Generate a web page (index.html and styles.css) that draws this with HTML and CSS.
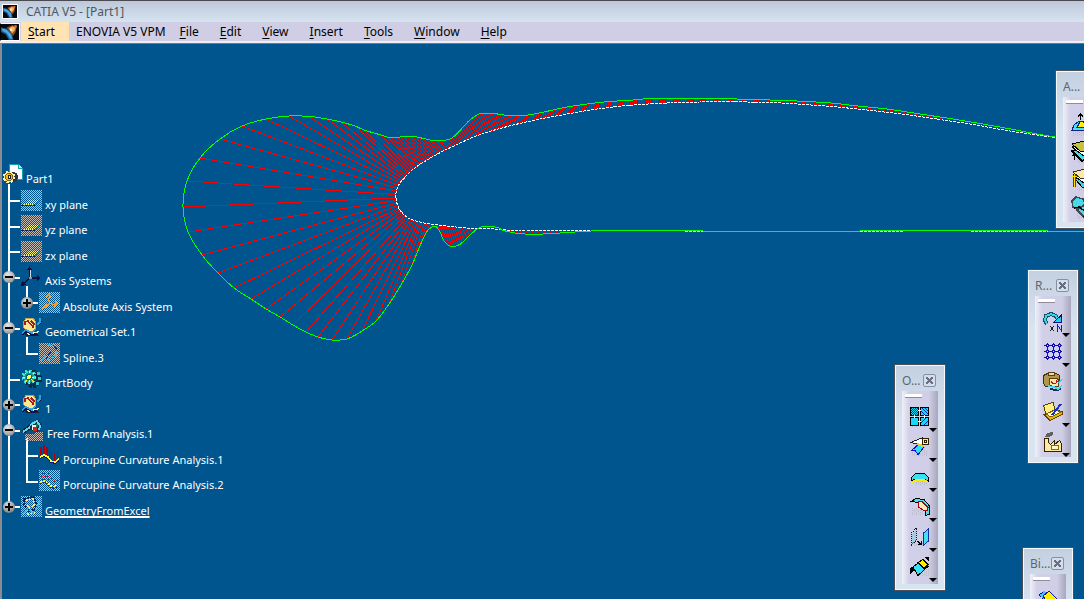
FILE: index.html
```html
<!DOCTYPE html>
<html lang="en">
<head>
<meta charset="utf-8">
<title>CATIA V5 - [Part1]</title>
<link rel="stylesheet" href="styles.css">
</head>
<body>
<svg class="defs" aria-hidden="true">
  <defs>
    <pattern id="chk" width="2" height="2" patternUnits="userSpaceOnUse"><path fill="#c4bcb4" d="M0 0h1v1H0zM1 1h1v1H1z"/></pattern>
    <pattern id="dots" width="2" height="2" patternUnits="userSpaceOnUse"><path fill="#1220c0" d="M0 0h1v1H0zM1 1h1v1H1z"/></pattern>
    <pattern id="shade" width="4" height="2" patternUnits="userSpaceOnUse"><path fill="#b8b8c4" d="M0 0h1v1H0zM2 1h1v1H2z"/></pattern>
  </defs>
  <symbol id="logo" viewBox="0 0 16 14" preserveAspectRatio="none">
    <path fill="#080810" d="M0 0h16v14H0z"/>
    <path fill="#1c5a90" d="M0 3l5 1 5 4 1 6H7L4 9 0 7z"/>
    <path fill="#48a8e0" d="M1 4l4 1 4 4 1 4H8L5 8 1 6z"/>
    <path fill="#a04c18" d="M5 3l5-2 4 1-1 5-2 3-3-3z"/>
    <path fill="#f0b060" d="M7 4l3-2 3 1-1 3-2 2z"/>
    <path fill="#fff4d0" d="M8 4h2v2H8z"/><path fill="#d07830" d="M12 1h2v2h-2z"/>
  </symbol>
  <symbol id="part" viewBox="0 0 21 21">
    <path fill="#fff" stroke="#10a0b0" d="M6.500.5h9l4 4v11h-13z"/><path fill="#b8e8f0" stroke="#10a0b0" d="M15.500.5v4h4"/>
    <circle cx="10" cy="13" r="5" fill="#303048"/>
    <circle cx="6" cy="13" r="5" fill="#ffe080" stroke="#fff0b0" stroke-width="3" stroke-dasharray="2 2"/>
    <circle cx="6" cy="13" r="3.500" fill="#e8c020" stroke="#806010"/><path fill="#202020" d="M5 11h3v4H5z"/><path fill="#ffff80" d="M6 12h1v2H6z"/>
  </symbol>
  <symbol id="plane" viewBox="0 0 21 21">
    <path fill="url(#chk)" d="M0 0h21v21H0z"/>
    <path fill="#00558e" d="M7 10h12l-6 6H2z" opacity=".6"/>
    <path stroke="#ffff70" stroke-dasharray="1 1" d="M8 10.500h11M7 11.500h10M6 12.500h10M5 13.500h9M3 14.500h9"/>
    <path stroke="#101060" d="M0 15.500h14" stroke-dasharray="3 1"/><path stroke="#20c0c0" stroke-dasharray="2 1" d="M14 15l5-5" fill="none"/>
  </symbol>
  <symbol id="axis" viewBox="0 0 21 21">
    <path stroke="#101040" fill="none" stroke-width="1.500" d="M8.500 2v10h9M8.500 12l-6 6"/>
    <path stroke="#e0d8e0" fill="none" d="M9.500 3v8"/>
    <path fill="#101040" d="M6 4l2.500-4L11 4zM16 9l4 3-4 3zM1 15l-1 5 5-1z"/><path fill="#60a0c8" d="M8 11h3v2H8z"/>
  </symbol>
  <symbol id="absaxis" viewBox="0 0 21 21">
    <path fill="url(#chk)" d="M0 0h21v21H0z"/>
    <path stroke="#f09820" fill="none" stroke-width="2" stroke-dasharray="2 1" d="M9.500 2v10h9M9.500 12L2 18"/>
    <path stroke="#f09820" fill="none" d="M7 5l3-4 2 4M15 9l4 3-4 3"/>
  </symbol>
  <symbol id="geoset" viewBox="0 0 21 21">
    <path fill="#202030" d="M6 15h9l3 4H5l-2-2z"/>
    <path fill="#ffe890" stroke="#c8a040" d="M2.500 5L5 1.500 12 1l2 3v9l-3 2-5-1-4-4z"/>
    <path fill="#fff4b8" d="M6 15h7l5-1-4 4H7z"/>
    <path stroke="#a02020" stroke-width="1.500" fill="none" d="M4 8V5l3-1 5 6 1-3-3-3"/>
    <path stroke="#101050" stroke-width="2" fill="none" d="M1 18l4-4 3 1 3 3 5-1M18 8l2-4"/>
    <path stroke="#30a0d8" stroke-width="1.500" fill="none" d="M1 16l4-3 6 3 3-4M16 8l3-3V1"/>
  </symbol>
  <symbol id="spline" viewBox="0 0 21 21">
    <path fill="url(#chk)" d="M0 0h21v21H0z"/>
    <path stroke="#38b0e0" stroke-width="2" fill="none" stroke-dasharray="3 1" d="M3 18l3-5 2 1 3 4M9 2h5l4 5-1 5-4 3"/>
    <path stroke="#103080" fill="none" d="M7 16l5-8M14 2l5 6"/>
  </symbol>
  <symbol id="body" viewBox="0 0 21 21">
    <circle cx="12" cy="11" r="7" fill="#103050" stroke="#102848" stroke-width="4" stroke-dasharray="3 1"/>
    <circle cx="8" cy="9" r="6" fill="#189888" stroke="#38e0d8" stroke-width="3" stroke-dasharray="2 2"/>
    <path stroke="#ffff50" stroke-dasharray="2 1" d="M8.500 3v13M2 9.500h13M4 5l9 9M13 5l-9 9"/>
    <circle cx="8" cy="9" r="2.500" fill="#ffff40" stroke="#106070"/>
    <path fill="#30c8c0" d="M16 4h3v3h-3zM17 9h3v3h-3zM15 14h3v3h-3z"/>
  </symbol>
  <symbol id="analysis" viewBox="0 0 23 23">
    <path fill="url(#chk)" d="M4 15h8l3-2h7v9H4z"/>
    <path stroke="#102030" stroke-width="4" d="M2 13l7-5" fill="none"/><path fill="#103050" d="M7 6l10-6 4 7-4 6-8-2z"/>
    <path stroke="#60d8e8" stroke-width="2" fill="none" d="M2 13l7-5M9 6l7-4 3 5-1 4"/>
    <path fill="#f0f0e8" d="M11 6h5v5h-5z"/><path fill="#d02020" d="M12 8h4v4h-4z"/><path fill="#108050" d="M15 5h2v3h-2z"/>
  </symbol>
  <symbol id="comb" viewBox="0 0 21 21">
    <path fill="#b00010" d="M1 2h2v9H1zM4 0h2v10H4zM7 2h2v10H7zM10 5h1v8h-1zM12 7h1v8h-1zM15 8h1v8h-1zM18 7h1v8h-1z"/>
    <path stroke="#101080" stroke-width="2" fill="none" d="M1 13l4-2 4 2 3 4 4 1 4-3"/>
    <path stroke="#ffff20" stroke-width="1.500" fill="none" d="M1 12l4-2 4 2 3 4 4 1 4-3"/>
  </symbol>
  <symbol id="combhid" viewBox="0 0 21 21">
    <path fill="url(#chk)" d="M0 0h21v21H0z"/>
    <path fill="#c81828" d="M2 3h2v1H2zM5 3h2v1H5zM8 3h2v1H8zM2 6h2v1H2zM5 6h2v1H5zM8 6h2v1H8zM2 9h2v1H2zM5 9h2v1H5zM8 9h2v1H8zM12 8h1v2h-1zM15 10h1v2h-1zM18 9h1v2h-1z"/>
    <path stroke="#1830a0" stroke-dasharray="2 1" fill="none" stroke-width="1.500" d="M1 14l5-2 4 3 3 3 6-1"/><path stroke="#ffff30" stroke-dasharray="2 1" fill="none" stroke-width="1.500" d="M1 12l5-1 4 3 3 3 6-2"/>
  </symbol>
  <symbol id="excel" viewBox="0 0 21 21">
    <path fill="url(#chk)" d="M0 0h21v21H0z"/>
    <path fill="none" stroke="#101850" stroke-width="2" stroke-dasharray="2 1" d="M3 3l9-2 3 4-1 8-6 2-5-6z"/>
    <path fill="none" stroke="#ffe870" stroke-width="1.500" stroke-dasharray="2 1" d="M5 4l7-1 1 7-5 2-3-4M6 18l8-1"/>
    <path fill="none" stroke="#38b0d8" stroke-width="1.500" stroke-dasharray="3 1" d="M2 17l5-4 5 4 5-7 2-6"/>
  </symbol>

  <symbol id="t-patch" viewBox="0 0 20 20">
    <path fill="url(#shade)" d="M2 19h16v1H2z"/>
    <path fill="#18d8f8" stroke="#000" d="M.5.500h8v8h-8zM10.500.500h8v8h-8zM.5 10.500h8v8h-8zM10.500 10.500h8v8h-8z"/>
    <path fill="url(#dots)" d="M1 1h7v7H1z"/><path stroke="#1020b0" d="M12 1l6 6M11 4l4 4M15 1l3 3M16 11l-5 5M18 14l-4 4"/>
    <path stroke="#fff" d="M8 3.500h3M4.500 8v3M14.500 8v3M8 14.500h3"/>
  </symbol>
  <symbol id="t-scan" viewBox="0 0 20 20">
    <path fill="url(#shade)" d="M2 13h16v6H2z"/>
    <path fill="#28e0f8" d="M1 13l8-6 6 3-7 8-3-5z"/><path stroke="#1010d0" fill="none" d="M1 14l8-7M1 14l4-1 3 5 6-8"/>
    <path fill="#fff" stroke="#202020" d="M.5 5.500L12 1v6l-5 0z"/><path stroke="#e8d020" stroke-width="2" d="M7 7l6 2"/>
    <path fill="#ffe8a0" stroke="#302000" d="M12.500 1.500h6v6h-6z"/><path stroke="#302000" fill="none" d="M14.500 3.500h2v2h-2z"/>
  </symbol>
  <symbol id="t-dome" viewBox="0 0 20 20">
    <path fill="url(#shade)" d="M5 14h13v4H5z"/>
    <path fill="#38e0f4" stroke="#000" d="M1.500 13.500L2 10l4-4h8l4 4v4l-4-2H6z"/><path stroke="#ffe800" stroke-width="2" fill="none" d="M2 15l4-2h8l4 2"/>
  </symbol>
  <symbol id="t-bend" viewBox="0 0 20 20">
    <path fill="url(#shade)" d="M2 11h12v7H2z"/>
    <path fill="#50e0e8" stroke="#000" d="M1 4.500l5-3 8 1 5 6v9l-4 1v-5l-6-8z"/><path fill="#ffe8b8" stroke="#a00010" d="M8 4.500h4l6 6-1 3-3 0-5-3-1-3z"/>
  </symbol>
  <symbol id="t-mirror" viewBox="0 0 20 20">
    <path fill="url(#shade)" d="M4 16h14v3H4z"/>
    <path fill="none" stroke="#101820" stroke-dasharray="1 1" d="M1.500 6l5-5v12l-5 5z"/><path fill="#70c8d8" opacity=".5" d="M2 7l4-4v10l-4 4z"/>
    <path fill="#40e0f0" stroke="#1030a0" d="M13.500 6l5-4v12l-5 4z"/><path stroke="#000" d="M7 14l4 3M11.500 14v3.500H8" fill="none"/>
  </symbol>
  <symbol id="t-extend" viewBox="0 0 20 20">
    <path fill="url(#shade)" d="M6 11h13v8H6z"/>
    <path fill="#38e0f8" stroke="#000" d="M1 11.500l9-7 5 2 3 3-10 9-3-5z"/><path fill="#ffec00" stroke="#000" d="M8 5.500l5-3 5 5-4 4z"/><path fill="#000" d="M14 0h5v5zM0 11l4-1 1 3-5 4z"/>
  </symbol>
  <symbol id="t-repeat" viewBox="0 0 20 20">
    <path fill="none" stroke="#105060" stroke-width="4" d="M4 12L2 8l1-4 5-2 5 2 2 4"/><path fill="none" stroke="#38d8f0" stroke-width="2" d="M4 12L2 8l1-4 5-2 5 2 2 4"/>
    <path fill="#18d0f0" stroke="#101080" d="M18.500 3v7.500h-8z"/><path stroke="#202020" d="M7 14l4 5M11 14l-4 5"/><path fill="none" stroke="#1010f0" d="M14.500 20v-7l4 6v-6"/>
  </symbol>
  <symbol id="t-grid" viewBox="0 0 20 20">
    <path stroke="#1010b0" d="M1 3.500h18M1 9.500h18M1 15.500h18M4.500 1v17M10.500 1v17M16.500 1v17"/>
    <path fill="#e8e8ff" stroke="#1010b0" d="M3 3.500L4.500 2 6 3.500 4.500 5zM9 3.500L10.500 2 12 3.500 10.500 5zM15 3.500L16.500 2 18 3.500 16.500 5zM3 9.500L4.500 8 6 9.500 4.500 11zM9 9.500L10.500 8 12 9.500 10.500 11zM15 9.500L16.500 8 18 9.500 16.500 11zM3 15.500L4.500 14 6 15.500 4.500 17zM9 15.500L10.500 14 12 15.500 10.500 17zM15 15.500L16.500 14 18 15.500 16.500 17z"/>
  </symbol>
  <symbol id="t-paste" viewBox="0 0 20 20">
    <path fill="#b09848" stroke="#403010" d="M.5 3.500l4-2h9l3 2v7l-4 4h-10l-2-3z"/><path fill="#f0d8a0" stroke="#504020" d="M5.500.500h6v3h-6z"/>
    <path fill="#ffe8a8" stroke="#604010" d="M6.500 6.500h8l1 2v6h-6l-3-2z"/><path stroke="#c01010" fill="none" d="M8 9l2 3 3-1V8l2 2"/><path fill="none" stroke="#103060" stroke-width="2" d="M7 17l6 1 5-1"/><path stroke="#40d8f0" fill="none" stroke-width="1.500" d="M5 14l6 1 4 2 4-3M16 11l3-4"/>
  </symbol>
  <symbol id="t-book" viewBox="0 0 20 20">
    <path fill="#e8b800" stroke="#604000" d="M1 12.500l6 6 12-6v-3l-7-2z"/><path fill="#fff080" stroke="#504000" d="M.5 3.500L10 .5l2 7-9 5z"/><path fill="#fff8b8" stroke="#806000" d="M3 12l9-4 6 2-10 5z"/><path stroke="#1030d0" stroke-width="2" d="M9 13l9-11"/>
  </symbol>
  <symbol id="t-factory" viewBox="0 0 20 20">
    <path fill="#606060" d="M2 5l2-4 6-1v3L6 5z"/><path fill="#ffe8a0" stroke="#302000" d="M1.500 19.500v-13h4v4l2 2 4-4v4l5-4 2 3v8z"/><path fill="#fff8d0" stroke="#806820" d="M8.500 13.500h7v4h-7z"/>
  </symbol>
  <symbol id="t-cap" viewBox="0 0 24 24">
    <path fill="url(#shade)" d="M2 19h20v5H2z"/><path stroke="#000" d="M9.500 1v7M7 4.500L9.500 2 12 4.500" fill="none"/><path fill="#48e0f0" stroke="#102080" d="M1 18l2-5 5-4 8 1 6 8z"/><path fill="#fff000" stroke="#1010d0" d="M6 15.500l3-6h3l5 6z"/>
  </symbol>
  <symbol id="t-offset" viewBox="0 0 24 24">
    <path fill="url(#shade)" d="M6 19h18v4H6z"/><path fill="#38e0f0" stroke="#000" stroke-width="1.500" d="M1 11l12-4 10 8-12 6z"/><path fill="#fff" stroke="#000" d="M1 7l12-4 10 8-10 5z"/><path fill="#c8c040" stroke="#000" d="M1 4l12-3 10 8-13 3z"/><path stroke="#000" d="M3.500 20v-6M1 16l3-2 2 2" fill="none"/>
  </symbol>
  <symbol id="t-thick" viewBox="0 0 24 24">
    <path fill="url(#shade)" d="M6 19h18v4H6z"/><path fill="#30d8e8" stroke="#000" d="M4 11l10-4 9 8-11 5z"/><path fill="#fff" stroke="#000" d="M2 7l12-4 9 8-10 4z"/><path fill="#ffe8a0" stroke="#303030" d="M2 4l12-3 9 8-13 2z"/><path stroke="#b01010" stroke-width="3" d="M3.500 19V7"/><path stroke="#ffe000" d="M3.500 19V6M1 8.500h5"/>
  </symbol>
  <symbol id="t-join" viewBox="0 0 24 24">
    <path fill="url(#shade)" d="M6 16h18v7H6z"/><path fill="#48d8e8" stroke="#404850" stroke-width="1.500" d="M1 5l4-4 7 2 2 5-7 5-5-2zM6 14l9-6 7 3v6l-9 4z"/><path stroke="#000" fill="none" stroke-width="1.500" d="M3 12l5-1 7 5-2 5"/>
  </symbol>
  <symbol id="t-measure" viewBox="0 0 20 20">
    <path fill="#40c8e8" stroke="#1010a0" stroke-dasharray="1 1" d="M1 5l5-4 5 3-5 6z"/><path fill="#fff000" stroke="#1010c0" d="M5 6l6-5 9 9v9h-6z"/>
  </symbol>
</svg>

<header class="titlebar">
  <svg class="title-logo"><use href="#logo"/></svg>
  <h1>CATIA V5 - [Part1]</h1>
</header>
<nav class="menubar" aria-label="Main menu">
  <svg class="menu-logo"><use href="#logo"/></svg>
  <button class="menu active" type="button"><u>S</u>tart</button>
  <button class="menu tight" type="button">ENOVIA V5 VPM</button>
  <button class="menu" type="button"><u>F</u>ile</button>
  <button class="menu" type="button"><u>E</u>dit</button>
  <button class="menu" type="button"><u>V</u>iew</button>
  <button class="menu" type="button"><u>I</u>nsert</button>
  <button class="menu" type="button"><u>T</u>ools</button>
  <button class="menu" type="button"><u>W</u>indow</button>
  <button class="menu" type="button"><u>H</u>elp</button>
</nav>

<main class="workspace">
  <svg class="viewport" width="1082" height="555" viewBox="2 44 1082 555" role="img" aria-label="Porcupine curvature analysis of an airfoil spline">
    <path id="teeth" class="teeth"/>
    <path id="curve-upper" class="curve"/>
    <path id="curve-lower" class="curve"/>
    <path id="envelope" class="envelope"/>
    <path class="envelope" d="M600 230.500H703M703 231.500H860M860 230.500H1048M1048 231.500H1084"/>
    <path class="curve" d="M685 231.500H703M860 231.500H904M971 231.500H1048"/>
  </svg>

  <div class="tree-pane">
    <svg class="links" width="60" height="357" viewBox="2 162 60 357" aria-hidden="true">
      <path d="M9 184V507M9 201H20M9 227H20M9 252H20M9 278H20M9 329H20M9 380H20M9 405H20M9 431H20M9 507H20M27 286V303H38M27 337V354H38M27 438V482H38M27 456H38"/>
    </svg>
    <ul class="tree" role="tree">
      <li class="root" role="treeitem"><svg class="icon"><use href="#part"/></svg><span>Part1</span></li>
      <li role="treeitem"><svg class="icon"><use href="#plane"/></svg><span>xy plane</span></li>
      <li role="treeitem"><svg class="icon"><use href="#plane"/></svg><span>yz plane</span></li>
      <li role="treeitem"><svg class="icon"><use href="#plane"/></svg><span>zx plane</span></li>
      <li role="treeitem"><button class="toggle open" type="button" aria-label="Collapse Axis Systems"></button><svg class="icon"><use href="#axis"/></svg><span>Axis Systems</span></li>
      <li class="child" role="treeitem"><button class="toggle" type="button" aria-label="Expand Absolute Axis System"></button><svg class="icon"><use href="#absaxis"/></svg><span>Absolute Axis System</span></li>
      <li role="treeitem"><button class="toggle open" type="button" aria-label="Collapse Geometrical Set.1"></button><svg class="icon"><use href="#geoset"/></svg><span>Geometrical Set.1</span></li>
      <li class="child" role="treeitem"><svg class="icon"><use href="#spline"/></svg><span>Spline.3</span></li>
      <li role="treeitem"><svg class="icon"><use href="#body"/></svg><span>PartBody</span></li>
      <li role="treeitem"><button class="toggle" type="button" aria-label="Expand 1"></button><svg class="icon"><use href="#geoset"/></svg><span>1</span></li>
      <li role="treeitem"><button class="toggle open" type="button" aria-label="Collapse Free Form Analysis.1"></button><svg class="icon large"><use href="#analysis"/></svg><span>Free Form Analysis.1</span></li>
      <li class="child" role="treeitem"><svg class="icon"><use href="#comb"/></svg><span>Porcupine Curvature Analysis.1</span></li>
      <li class="child" role="treeitem"><svg class="icon"><use href="#combhid"/></svg><span>Porcupine Curvature Analysis.2</span></li>
      <li role="treeitem"><button class="toggle" type="button" aria-label="Expand GeometryFromExcel"></button><svg class="icon"><use href="#excel"/></svg><span class="current">GeometryFromExcel</span></li>
    </ul>
  </div>

  <section class="palette palette-a" aria-label="Advanced surfaces">
    <header><h2>A...</h2><button class="close" type="button" aria-label="Close"></button></header>
    <div class="tools wide">
      <button class="tool" type="button" aria-label="Extrapolate"><svg><use href="#t-cap"/></svg></button>
      <button class="tool" type="button" aria-label="Offset"><svg><use href="#t-offset"/></svg></button>
      <button class="tool" type="button" aria-label="Thicken"><svg><use href="#t-thick"/></svg></button>
      <button class="tool" type="button" aria-label="Join"><svg><use href="#t-join"/></svg></button>
    </div>
  </section>

  <section class="palette palette-r" aria-label="Replication">
    <header><h2>R...</h2><button class="close" type="button" aria-label="Close"></button></header>
    <div class="tools">
      <button class="tool more" type="button" aria-label="Repeat"><svg><use href="#t-repeat"/></svg></button>
      <button class="tool more" type="button" aria-label="Pattern"><svg><use href="#t-grid"/></svg></button>
      <button class="tool" type="button" aria-label="Duplicate set"><svg><use href="#t-paste"/></svg></button>
      <button class="tool more" type="button" aria-label="Catalog"><svg><use href="#t-book"/></svg></button>
      <button class="tool more" type="button" aria-label="PowerCopy"><svg><use href="#t-factory"/></svg></button>
    </div>
  </section>

  <section class="palette palette-o" aria-label="Operations">
    <header><h2>O...</h2><button class="close" type="button" aria-label="Close"></button></header>
    <div class="tools">
      <button class="tool more" type="button" aria-label="Join"><svg><use href="#t-patch"/></svg></button>
      <button class="tool more" type="button" aria-label="Split"><svg><use href="#t-scan"/></svg></button>
      <button class="tool more" type="button" aria-label="Boundary"><svg><use href="#t-dome"/></svg></button>
      <button class="tool more" type="button" aria-label="Fillet"><svg><use href="#t-bend"/></svg></button>
      <button class="tool more" type="button" aria-label="Translate"><svg><use href="#t-mirror"/></svg></button>
      <button class="tool more" type="button" aria-label="Extrapolate"><svg><use href="#t-extend"/></svg></button>
    </div>
  </section>

  <section class="palette palette-b" aria-label="BiW templates">
    <header><h2>Bi...</h2><button class="close" type="button" aria-label="Close"></button></header>
    <div class="tools">
      <button class="tool" type="button" aria-label="Junction"><svg><use href="#t-measure"/></svg></button>
    </div>
  </section>
</main>
<script src="script.js"></script>
</body>
</html>
```
FILE: styles.css
```css
* { box-sizing: border-box; }
body {
  margin: 0;
  height: 100vh;
  display: flex;
  flex-direction: column;
  overflow: hidden;
  font-family: "Noto Sans", "Open Sans", sans-serif;
  font-size: 12px;
  background: #00558e;
}
button { font: inherit; color: inherit; border: 0; padding: 0; margin: 0; background: none; }
h1, h2 { margin: 0; font-weight: 400; font-size: 12px; }
.defs { position: absolute; width: 0; height: 0; }

.titlebar {
  flex: none;
  height: 22px;
  display: flex;
  align-items: center;
  gap: 8px;
  padding-left: 2px;
  border-top: 1px solid #4a4a50;
  background: linear-gradient(#bdc9da, #d6e3f0);
  color: #50565e;
}
.title-logo { width: 16px; height: 15px; border: 1px solid #fff; }

.menubar {
  flex: none;
  height: 21px;
  display: flex;
  align-items: stretch;
  background: #d0cee5;
  border-bottom: 2px solid #f0eef4;
  color: #000;
}
.menu-logo { width: 20px; height: 18px; margin: 1px 1px 0 0; border: 1px solid #fff; border-left-color: #000; }
.menu { padding: 0 14px 0 7px; line-height: 19px; }
.menu.tight { padding-right: 7px; }
.menu.active { background: #ffe3b3; }
.menu u { text-underline-offset: 2px; }

.workspace {
  position: relative;
  flex: 1;
  min-height: 0;
  overflow: hidden;
  border-top: 1px solid #707884;
  border-left: 2px solid #888c90;
  background: #00558e;
}
.viewport { position: absolute; top: 0; left: 0; }
.viewport path { fill: none; stroke-width: 1; shape-rendering: crispEdges; }
.viewport .teeth { stroke: #f00; }
.viewport .curve { stroke: #fff; stroke-dasharray: 3 1; }
.viewport .envelope { stroke: #0f0; }

.tree-pane { position: relative; width: 260px; padding-top: 118px; }
.links { position: absolute; left: 0; }
.links path { fill: none; stroke: #fff; stroke-width: 2; shape-rendering: crispEdges; }
.tree {
  position: relative;
  margin: 0;
  padding: 0;
  list-style: none;
  display: grid;
  grid-template-rows: repeat(7, 26px 25px);
  font-size: 11px;
  color: #fff;
}
.tree li { display: flex; align-items: flex-start; gap: 3px; padding: 2px 0 0 19px; white-space: nowrap; }
.tree li.root { padding-left: 1px; gap: 2px; }
.tree li.child { padding-left: 37px; }
.tree span { padding-top: 7px; line-height: 16px; }
.tree .current { text-decoration: underline 2px; text-underline-offset: 1px; text-decoration-skip-ink: none; }
.icon { flex: none; width: 21px; height: 21px; shape-rendering: crispEdges; }
.icon.large { width: 23px; height: 23px; }
.toggle {
  width: 12px;
  height: 12px;
  margin: 5px 3px 0 -18px;
  border-radius: 50%;
  background:
    linear-gradient(#000, #000) center / 8px 2px no-repeat,
    linear-gradient(#000, #000) center / 2px 8px no-repeat,
    radial-gradient(circle at 40% 30%, #d8d8d8, #989898 60%, #505050);
}
.toggle.open {
  background:
    linear-gradient(#000, #000) center / 8px 2px no-repeat,
    radial-gradient(circle at 40% 30%, #e8e8e8, #a8a8a8 60%, #606060);
}

.palette {
  position: absolute;
  width: 52px;
  padding: 0 7px 6px;
  border: 1px solid #4c5058;
  box-shadow: inset 0 0 0 1px #f4f8fc;
  background: linear-gradient(#c3d0e0, #d9e4f1 60px);
}
.palette header { height: 26px; padding-top: 5px; display: flex; align-items: center; justify-content: space-between; color: #60666e; }
.palette h2 { line-height: 16px; }
.close {
  width: 13px;
  height: 13px;
  margin-right: 2px;
  border: 1px solid #8490a4;
  border-radius: 2px;
  background:
    linear-gradient(45deg, transparent 40%, #687080 40% 60%, transparent 60%) center / 7px 7px no-repeat,
    linear-gradient(-45deg, transparent 40%, #687080 40% 60%, transparent 60%) center / 7px 7px no-repeat,
    #d4deea;
}
.tools {
  position: relative;
  display: flex;
  flex-direction: column;
  padding: 11px 0 2px;
  background: linear-gradient(90deg, #f0f0fa, #d2d0e8 20%, #d0cee6 75%, #a8a6bc);
}
.tools::before {
  content: "";
  position: absolute;
  top: 3px;
  left: 3px;
  width: 17px;
  height: 3px;
  background: #fff;
  border-bottom: 1px solid #908c9c;
}
.tool { position: relative; height: 30px; padding-left: 8px; display: flex; align-items: center; }
.tool svg { flex: none; width: 20px; height: 20px; shape-rendering: crispEdges; }
.tool.more::after {
  content: "";
  position: absolute;
  right: 1px;
  bottom: 0;
  border: 4px solid transparent;
  border-bottom: 0;
  border-top-color: #000;
}
.wide { padding: 13px 0 0; }
.wide .tool svg { width: 24px; height: 24px; }
.wide .tool { height: 28px; }

.palette-a { top: 26px; right: -23px; }
.palette-r { top: 225px; right: 5px; }
.palette-r .tools { padding-bottom: 0; }
.palette-o { top: 320px; right: 138px; }
.palette-b { top: 503px; right: 10px; }
```
FILE: script.js
```js
// Envelope of the curvature comb, from the upper trailing edge round to the lower side.
const envelope = [
  [1055,137],[1037,134],[997,126.5],[953,119],[920,114],[887,109],[853,105.5],[831,103],[797,101],[770,100],
  [726,98.7],[697,98.3],[652,98.5],[630,100.3],[607,101.7],[580,105],[560,108.3],[543,112.3],[525,115.3],
  [507,115.3],[495,113.7],[483,113.3],[477,115],[468,121.7],[458,132.7],[450,139],[440,140.7],[430,140],
  [417,137],[407,136.3],[397,137.3],[388,137.3],[381,135],[374,133],[364,130],[355,126],[341,122],[327,119],
  [310,116.5],[289,116],[266,119],[242,126],[220,139],[200,158],[187,181],[183,207],[188,232],[202,255],
  [218,273],[234,288],[251,299],[266,309],[280,317],[293,325],[306,332],[318,337],[332,340],[347,339],
  [362,331],[376,321],[389,304],[401,285],[412,265],[417,253],[423,239],[428,230],[433,226.7],[436,226.7],
  [440,231.7],[443,239.3],[448,245],[453,246.7],[460,244.3],[470,235],[478,228.3],[485,226.5],[497,227.3],
  [503,230.3],[517,233.3],[535,234.3],[560,233],[580,231.7],[600,230.5]
];
const upper = [
  [396,198],[396,193],[399,184.5],[405,177.3],[413,169.3],[425,161.3],[440,152.7],[458,144],[477,135.7],
  [497,129.3],[523,122.7],[547,117.7],[573,113],[597,109],[630,105.3],[667,103],[700,102],[747,102],[773,102.5],
  [807,104.7],[840,107.3],[873,110.7],[907,114.8],[940,119.5],[973,124.5],[1013,131.5],[1055,137.5]
];
const lower = [
  [396,198],[397,203.5],[399.5,209.3],[404,214.7],[410,219],[420,222],[430,224],[447,226],[467,228],
  [490,228.7],[520,230.5],[600,230.5]
];
// Teeth stations: foot x, foot y, tip x, tip y, number of teeth up to this station.
const upperTeeth = [
  [396,198,183,207,1],[396,194.5,187,181,1],[396.5,191,200,158,1],[397,188,220,139,1],[398.5,185.5,242,126,1],
  [400,183,266,119,1],[401.5,181,289,116,1],[403,179,310,117,1],[404.5,177,327,119,1],[406,175.5,341,122,1],
  [407.5,174,355,126,1],[409,172.5,364,130,1],[411,171,374,133,1],[413,169.5,381,135,1],[415,168,388,137,1],
  [425,161.3,407,136.5,6],[440,152.7,430,140,7],[450,148,441,141,4],[458,144,452,138,3],[467,140,461,129,4],
  [477,135.7,469,121,4],[486,132.5,478,114.5,4],[497,129.3,490,113.5,5],[510,126,505,115,6],[523,122.7,521,115.4,6],
  [547,117.7,545,112,10],[573,113,572,106.3,11],[597,109,596,103,10],[630,105.3,630,100.3,14],[667,103,667,98.5,16],
  [700,102,700,98.3,14],[747,102,747,99.3,20],[773,102.5,773,100,11],[807,104.7,807,101.7,14],[840,107.3,840,104,14],
  [873,110.7,873,107.5,14],[907,114.8,907,112,12],[940,119.5,940,117,10]
];
const lowerTeeth = [
  [396.5,200.5,188,232,1],[397,203,202,255,1],[398,205.5,218,273,1],[399,208,234,288,1],[400,210,251,299,1],
  [402,212,266,309,1],[403.5,214,280,317,1],[405,215.5,293,325,1],[407,217,306,332,1],[409,218.3,318,337,1],
  [411,219.5,332,340,1],[413,220,347,339,1],[415.5,221,362,331,1],[418,221.5,376,321,1],[420,222,389,304,1],
  [422,222.5,401,285,1],[424.5,223,412,265,1],[427,223.5,417,253,1],[429.5,224,423,239,1],[433,225,430,228,1]
];
const bumpTeeth = [
  [437,225.5,440,230,1],[440,226,444,239,1],[446,226.5,451,245,3],[452,227,458,244,3],[459,227.5,464,240,3],[468,228,472,233,3]
];
const tailTeeth = [[507,230,507,231,1],[520,230.5,520,233.5,4],[560,230.5,560,233,13],[590,230.5,590,231.5,8]];

// Catmull-Rom spline through the points, written as cubic segments.
function spline(p) {
  let d = `M${p[0]}`;
  for (let i = 0; i < p.length - 1; i++) {
    const a = p[i - 1] || p[i], b = p[i], c = p[i + 1], e = p[i + 2] || c;
    d += `C${b[0] + (c[0] - a[0]) / 6} ${b[1] + (c[1] - a[1]) / 6} ${c[0] - (e[0] - b[0]) / 6} ${c[1] - (e[1] - b[1]) / 6} ${c[0]} ${c[1]}`;
  }
  return d;
}
function comb(stations) {
  let d = "", prev = stations[0];
  for (const s of stations) {
    for (let k = 1; k <= s[4]; k++) {
      const v = [0, 1, 2, 3].map(j => prev[j] + (s[j] - prev[j]) * k / s[4]);
      d += `M${v[2]} ${v[3]}L${v[0]} ${v[1]}`;
    }
    prev = s;
  }
  return d;
}
const set = (id, d) => document.getElementById(id).setAttribute("d", d);
set("teeth", [upperTeeth, lowerTeeth, bumpTeeth, tailTeeth].map(comb).join(""));
set("curve-upper", spline(upper));
set("curve-lower", spline(lower));
set("envelope", spline(envelope));
```
